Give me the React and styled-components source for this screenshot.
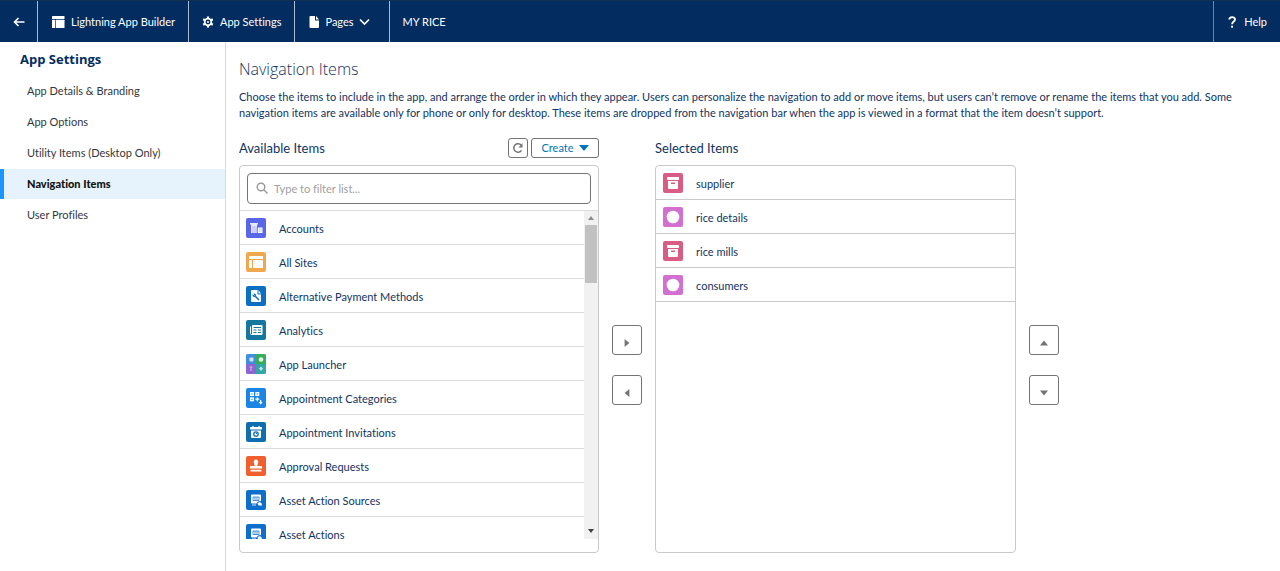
import React from "react";
import styled, { createGlobalStyle } from "styled-components";

const GlobalStyle = createGlobalStyle`
  *, *::before, *::after { box-sizing: border-box; }
  body {
    margin: 0;
    background: #fff;
    color: #10345f;
    font-family: Lato, "Open Sans", sans-serif;
    font-size: 11px;
    font-variant-ligatures: none;
    line-height: 16px;
  }
  button, input { font: inherit; color: inherit; }
  h1, h2, p, ul { margin: 0; padding: 0; }
  ul { list-style: none; }
`;

const Page = styled.div`
  min-height: 100vh;
  display: flex;
  flex-direction: column;
`;

const TopBar = styled.header`
  display: flex;
  height: 42px;
  background: #032d60;
  border-top: 1px solid #12304f;
  color: #fff;
`;

const BarItem = styled.button`
  display: flex;
  align-items: center;
  gap: ${(p) => p.$gap ?? 6}px;
  padding: 0 ${(p) => p.$right ?? 13}px 0 ${(p) => p.$left ?? 13}px;
  border: 0;
  border-right: 1px solid #a9bbd2;
  background: none;
  white-space: nowrap;
`;

const AppName = styled.div`
  flex: 1;
  display: flex;
  align-items: center;
  padding: 0 13px;
`;

const HelpLink = styled.a`
  display: flex;
  align-items: center;
  gap: 6px;
  padding: 0 13px 0 12px;
  border-left: 1px solid #6b84a6;
  color: #fff;
  text-decoration: none;
`;

const Body = styled.div`
  flex: 1;
  display: flex;
`;

const Sidebar = styled.nav`
  flex: 0 0 226px;
  padding-top: 8px;
  border-right: 1px solid #dddbda;
`;

const SidebarTitle = styled.h2`
  padding-left: 20px;
  margin-bottom: 8px;
  color: #032d60;
  font-family: "Open Sans", sans-serif;
  font-size: 13px;
  line-height: 18px;
`;

const SidebarList = styled.ul`
  display: grid;
  gap: 1px;
`;

const SidebarLink = styled.a`
  display: block;
  height: 30px;
  padding-left: ${(p) => (p.$active ? 23 : 27)}px;
  border-left: ${(p) => (p.$active ? "4px solid #1b96ff" : "0")};
  background: ${(p) => (p.$active ? "#e6f2fc" : "transparent")};
  color: ${(p) => (p.$active ? "#111" : "#33373b")};
  font-weight: ${(p) => (p.$active ? 900 : 400)};
  line-height: 30px;
  text-decoration: none;
`;

const Main = styled.main`
  flex: 1;
  min-width: 0;
  padding: 17px 38px 18px 13px;
`;

const Title = styled.h1`
  font-family: "Open Sans", sans-serif;
  font-size: 16px;
  font-weight: 300;
  line-height: 20px;
`;

const Intro = styled.p`
  margin: 10px 0 16px;
`;

const Picker = styled.div`
  display: flex;
  gap: 13px;
`;

const Column = styled.section`
  flex: 0 1 ${(p) => p.$width}px;
  min-width: 0;
  display: flex;
  flex-direction: column;
`;

const ColumnHead = styled.div`
  display: flex;
  align-items: center;
  gap: 3px;
  height: 22px;
  margin-bottom: 6px;
`;

const ColumnTitle = styled.h2`
  flex: 1;
  font-size: 13px;
  font-weight: 400;
  line-height: 20px;
`;

const SmallButton = styled.button`
  display: flex;
  align-items: center;
  justify-content: center;
  gap: 5px;
  height: 20px;
  width: ${(p) => p.$width}px;
  padding: 0;
  border: 1px solid #747474;
  border-radius: 3px;
  background: #fff;
  color: #0176b8;
`;

const Panel = styled.div`
  min-height: 388px;
  padding-bottom: 13px;
  border: 1px solid #c9c9c9;
  border-radius: 4px;
`;

const Filter = styled.div`
  padding: 7px 7px 6px;
  border-bottom: 1px solid #dddbda;
`;

const FilterBox = styled.label`
  display: flex;
  align-items: center;
  gap: 6px;
  height: 31px;
  padding: 0 8px;
  border: 1px solid #747474;
  border-radius: 4px;
`;

const FilterInput = styled.input`
  flex: 1;
  min-width: 0;
  padding: 0;
  border: 0;
  outline: 0;
  background: none;
  &::placeholder { color: #a0a0a0; opacity: 1; }
`;

const ScrollArea = styled.div`
  display: flex;
  height: 328px;
`;

const ItemList = styled.ul`
  flex: 1;
  min-width: 0;
  overflow: hidden;
`;

const Item = styled.li`
  display: flex;
  align-items: center;
  gap: 13px;
  height: 34px;
  padding-left: ${(p) => (p.$strong ? 7 : 6)}px;
  border-bottom: 1px solid ${(p) => (p.$strong ? "#c9c9c9" : "#dddbda")};
`;

const ItemName = styled.span`
  padding-top: 2px;
`;

const Tile = styled.svg`
  flex: none;
  width: 20px;
  height: 20px;
  border-radius: 2px;
  background: ${(p) => p.$color};
`;

const ScrollTrack = styled.div`
  flex: 0 0 14px;
  display: flex;
  flex-direction: column;
  align-items: center;
  background: #f1f1f1;
`;

const ScrollArrow = styled.svg`
  width: 14px;
  height: 14px;
`;

const ScrollThumb = styled.div`
  flex: 0 0 58px;
  width: 12px;
  margin-bottom: auto;
  background: #c1c1c1;
`;

const MoveButtons = styled.div`
  display: flex;
  flex-direction: column;
  justify-content: center;
  gap: 20px;
  padding-top: 40px;
`;

const MoveButton = styled.button`
  display: grid;
  place-items: center;
  width: 30px;
  height: 30px;
  padding: 5px 0 0;
  border: 1px solid #747474;
  border-radius: 3px;
  background: #fff;
  color: #747474;
`;

const ARROWS = {
  right: "M2 0l6 5-6 5z",
  left: "M8 0L2 5l6 5z",
  up: "M0 8l5-6 5 6z",
  down: "M0 2h10L5 8z",
};

const Arrow = ({ dir, size = 8 }) => (
  <svg width={size} height={size} viewBox="0 0 10 10" fill="currentColor" aria-hidden="true">
    <path d={ARROWS[dir]} />
  </svg>
);

const GLYPHS = {
  account: {
    color: "#5867e8",
    art: (
      <>
        <path d="M4 5h8v1.500h-1V15H5V6.500H4z" opacity=".85" />
        <path d="M11.500 9.500h5V15h-5z" />
        <path d="M7 8v7M9 8v7" stroke="#5867e8" strokeWidth=".4" />
        <path d="M11.200 9v6M13 11h.8M14.600 11h.8M13 13h.8M14.600 13h.8" stroke="#5867e8" strokeWidth=".8" />
      </>
    ),
  },
  sites: {
    color: "#f0a84f",
    art: (
      <>
        <rect x="3" y="4" width="14" height="3" rx=".6" />
        <rect x="3" y="8" width="3" height="8" rx=".6" />
        <rect x="7" y="8" width="10" height="8" rx=".6" />
      </>
    ),
  },
  payment: {
    color: "#0b6fc2",
    art: (
      <>
        <path d="M5 5q0-1 1-1h5.500v4.500H15V15q0 1-1 1H6q-1 0-1-1z" />
        <path d="M12.500 4L15 7.500h-2.500z" />
        <circle cx="8.300" cy="9.300" r="1.700" fill="#0b6fc2" />
        <path d="M9 10l4 4" stroke="#0b6fc2" strokeWidth="1.600" />
        <path d="M7 8l1.500 1.500" stroke="#fff" strokeWidth=".9" />
      </>
    ),
  },
  analytics: {
    color: "#15779f",
    art: (
      <>
        <path d="M4.500 6.500v7q0 1 1 1h1" fill="none" stroke="#fff" />
        <rect x="6" y="5" width="10.500" height="10" rx="1" />
        <path d="M7.500 7.500H15M7.500 10h3M12 10h3M7.500 12.500h3M12 12.500h3" stroke="#15779f" />
      </>
    ),
  },
  launcher: {
    color: "#5a9bdc",
    art: (
      <>
        <rect width="10" height="10" fill="#3f8fdc" />
        <rect x="10" width="10" height="10" fill="#37ad5c" />
        <rect y="10" width="10" height="10" fill="#8f64cf" />
        <rect x="10" y="10" width="10" height="10" fill="#35a6a8" />
        <rect x="3.500" y="3.500" width="4" height="4" rx="1" opacity=".75" />
        <circle cx="15" cy="5.500" r="2.300" opacity=".85" />
        <path d="M3.500 13h3M5 13v4" stroke="#fff" opacity=".6" />
        <path d="M15 12.500l2 2-2 2.500-2-2.500z" opacity=".7" />
      </>
    ),
  },
  categories: {
    color: "#1b85e5",
    art: (
      <g fill="none" stroke="#fff" strokeWidth="1.400">
        <rect x="4.700" y="4.700" width="2.600" height="2.600" />
        <rect x="10" y="4.700" width="2.600" height="2.600" />
        <rect x="4.700" y="10" width="2.600" height="2.600" />
        <path d="M11.300 9.200v4M9.300 11.200h4M14.700 12v3.500M13.300 14.200l1.400 1.400 1.400-1.400" strokeWidth="1.200" />
      </g>
    ),
  },
  invitations: {
    color: "#0f6fae",
    art: (
      <>
        <path d="M7 4v3M13 4v3" stroke="#fff" strokeWidth="1.400" />
        <rect x="4" y="5" width="12" height="2.500" rx=".8" />
        <path d="M5 8.500h10V15q0 1-1 1H6q-1 0-1-1z" />
        <circle cx="10" cy="12" r="2.200" fill="none" stroke="#0f6fae" strokeWidth="1.300" />
        <path d="M10 12l1.500-1.500" stroke="#0f6fae" />
      </>
    ),
  },
  approval: {
    color: "#f0602f",
    art: (
      <>
        <path d="M7.800 5.700a2.200 2.200 0 014.400 0c0 2-.9 2.500-.9 4.300H15q1.200 0 1.200 1.200v1.300H3.800v-1.300Q3.800 10 5 10h3.700c0-1.800-.9-2.300-.9-4.300z" />
        <rect x="4.500" y="13.800" width="11" height="1.800" rx=".6" />
      </>
    ),
  },
  asset: {
    color: "#0d6fca",
    art: (
      <>
        <path d="M6 4.500h8q1 0 1 1V11l-3 .5-1.500 2H6q-1 0-1-1v-7q0-1 1-1z" />
        <path d="M7 7h6v3.500H7zM9 7v3.500M11 7v3.500" fill="none" stroke="#0d6fca" strokeWidth=".7" />
        <path d="M11.500 13.500q2-2.500 4-.3l.5 2.300h-3.500z" />
        <path d="M6 15h4" stroke="#fff" strokeWidth=".8" />
      </>
    ),
  },
  box: {
    color: "#d95c84",
    art: (
      <>
        <rect x="4" y="4" width="12" height="3" rx=".7" />
        <path d="M5 8h10v7q0 1-1 1H6q-1 0-1-1z" />
        <path d="M8 10.200h4" stroke="#d95c84" strokeWidth="1.400" />
      </>
    ),
  },
  circle: { color: "#d36fd0", art: <circle cx="10" cy="10" r="6.300" /> },
};

const AVAILABLE = [
  ["Accounts", "account"],
  ["All Sites", "sites"],
  ["Alternative Payment Methods", "payment"],
  ["Analytics", "analytics"],
  ["App Launcher", "launcher"],
  ["Appointment Categories", "categories"],
  ["Appointment Invitations", "invitations"],
  ["Approval Requests", "approval"],
  ["Asset Action Sources", "asset"],
  ["Asset Actions", "asset"],
];

const SELECTED = [
  ["supplier", "box"],
  ["rice details", "circle"],
  ["rice mills", "box"],
  ["consumers", "circle"],
];

const SECTIONS = [
  "App Details & Branding",
  "App Options",
  "Utility Items (Desktop Only)",
  "Navigation Items",
  "User Profiles",
];

const Row = ({ name, glyph, strong }) => (
  <Item $strong={strong}>
    <Tile viewBox="0 0 20 20" fill="#fff" $color={GLYPHS[glyph].color} aria-hidden="true">
      {GLYPHS[glyph].art}
    </Tile>
    <ItemName>{name}</ItemName>
  </Item>
);

export default function App() {
  return (
    <Page>
      <GlobalStyle />
      <TopBar>
        <BarItem aria-label="Back" $left={13} $right={12}>
          <svg width="12" height="12" viewBox="0 0 12 12" fill="none" stroke="#fff" strokeWidth="1.600">
            <path d="M11.500 6H1.500M5.500 2L1.500 6l4 4" />
          </svg>
        </BarItem>
        <BarItem>
          <svg width="14" height="12" viewBox="0 0 14 12" fill="#fff">
            <rect x="1" width="12.500" height="3" rx=".6" />
            <rect x="1" y="3.700" width="3" height="8.300" rx=".6" />
            <rect x="4.700" y="3.700" width="8.800" height="8.300" rx=".6" />
          </svg>
          Lightning App Builder
        </BarItem>
        <BarItem>
          <svg width="12" height="12" viewBox="0 0 12 12" fill="none" stroke="#fff">
            <circle cx="6" cy="6" r="3.300" strokeWidth="1.700" />
            <circle cx="6" cy="6" r="1" fill="#fff" stroke="none" />
            <path d="M6 .5v2M6 9.500v2M1.200 3.200l1.800 1M9 7.800l1.800 1M1.200 8.800l1.800-1M9 4.200l1.800-1" strokeWidth="2.200" />
          </svg>
          App Settings
        </BarItem>
        <BarItem $gap={5} $right={19}>
          <svg width="12" height="12" viewBox="0 0 12 12" fill="#fff">
            <path d="M1.500 1q0-1 1-1h4.500v4.500h4V11q0 1-1 1H2.500q-1 0-1-1z" />
            <path d="M8 0l3 3.500H8z" />
          </svg>
          <span>Pages</span>
          <svg width="11" height="8" viewBox="0 0 11 8" fill="none" stroke="#fff" strokeWidth="1.600">
            <path d="M1 1.500l4.500 4.500L10 1.500" />
          </svg>
        </BarItem>
        <AppName>MY RICE</AppName>
        <HelpLink href="#help">
          <svg width="12" height="12" viewBox="0 0 12 12" fill="none" stroke="#fff" strokeWidth="1.900">
            <path d="M3.300 3.600C3.300.3 9 .3 9 3.500 9 5.600 6.100 5.500 6.100 8.300" />
            <path d="M6.100 9.700v2" />
          </svg>
          Help
        </HelpLink>
      </TopBar>
      <Body>
        <Sidebar aria-label="App Settings">
          <SidebarTitle>App Settings</SidebarTitle>
          <SidebarList>
            {SECTIONS.map((s) => (
              <li key={s}>
                <SidebarLink href="#section" $active={s === "Navigation Items"}>{s}</SidebarLink>
              </li>
            ))}
          </SidebarList>
        </Sidebar>
        <Main>
          <Title>Navigation Items</Title>
          <Intro>
            Choose the items to include in the app, and arrange the order in which they appear. Users can
            personalize the navigation to add or move items, but users can’t remove or rename the items that
            you add. Some navigation items are available only for phone or only for desktop. These items are
            dropped from the navigation bar when the app is viewed in a format that the item doesn’t support.
          </Intro>
          <Picker>
            <Column $width={360}>
              <ColumnHead>
                <ColumnTitle>Available Items</ColumnTitle>
                <SmallButton $width={20} aria-label="Refresh">
                  <svg width="12" height="12" viewBox="0 0 12 12" fill="none" stroke="#747474" strokeWidth="1.500">
                    <path d="M9.500 8.300A4.200 4.200 0 119.200 3.300" />
                    <path d="M10.500 1v4.500H6.500z" fill="#747474" stroke="none" />
                  </svg>
                </SmallButton>
                <SmallButton $width={68}>
                  Create <Arrow dir="down" size={10} />
                </SmallButton>
              </ColumnHead>
              <Panel>
                <Filter>
                  <FilterBox>
                    <svg width="12" height="14" viewBox="0 0 12 14" fill="none" stroke="#999" strokeWidth="1.400">
                      <circle cx="5" cy="5" r="3.800" />
                      <path d="M7.800 7.800l3.700 3.700" />
                    </svg>
                    <FilterInput type="text" aria-label="Filter available items" placeholder="Type to filter list..." />
                  </FilterBox>
                </Filter>
                <ScrollArea>
                  <ItemList>
                    {AVAILABLE.map(([name, glyph]) => <Row key={name} name={name} glyph={glyph} />)}
                  </ItemList>
                  <ScrollTrack>
                    <ScrollArrow viewBox="0 0 14 14" fill="#8a8a8a"><path d="M4 9l3-4 3 4z" /></ScrollArrow>
                    <ScrollThumb />
                    <ScrollArrow viewBox="0 0 14 14" fill="#404040"><path d="M4 4h6L7 8z" /></ScrollArrow>
                  </ScrollTrack>
                </ScrollArea>
              </Panel>
            </Column>
            <MoveButtons>
              <MoveButton aria-label="Add to selected"><Arrow dir="right" /></MoveButton>
              <MoveButton aria-label="Remove from selected"><Arrow dir="left" /></MoveButton>
            </MoveButtons>
            <Column $width={361}>
              <ColumnHead>
                <ColumnTitle>Selected Items</ColumnTitle>
              </ColumnHead>
              <Panel>
                <ul>
                  {SELECTED.map(([name, glyph]) => <Row key={name} name={name} glyph={glyph} strong />)}
                </ul>
              </Panel>
            </Column>
            <MoveButtons>
              <MoveButton aria-label="Move up"><Arrow dir="up" /></MoveButton>
              <MoveButton aria-label="Move down"><Arrow dir="down" /></MoveButton>
            </MoveButtons>
          </Picker>
        </Main>
      </Body>
    </Page>
  );
}
